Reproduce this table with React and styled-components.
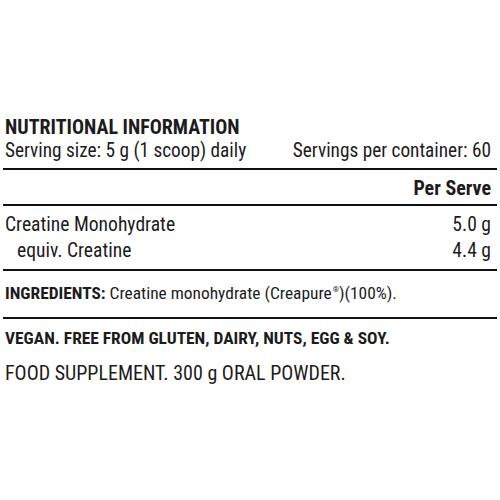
import React from "react";
import styled, { createGlobalStyle } from "styled-components";

const GlobalStyle = createGlobalStyle`
  html, body {
    margin: 0;
    padding: 0;
    background: #ffffff;
  }
  body {
    font-family: "Roboto", "Liberation Sans", sans-serif;
    color: #1c1c1c;
  }
`;

const Page = styled.div`
  width: 500px;
  height: 500px;
  box-sizing: border-box;
  padding: 116px 3px 0 3px;
`;

const Condensed = styled.div`
  font-stretch: condensed;
`;

const Heading = styled.div`
  font-size: 20px;
  font-weight: 700;
  line-height: 22px;
  padding-left: 2px;
`;

const Row = styled.div`
  display: flex;
  justify-content: space-between;
  align-items: baseline;
  padding: 0 6px 0 ${p => (p.$indent ? 14 : 2)}px;
  font-size: ${p => p.$size || 19.6}px;
  font-weight: ${p => (p.$bold ? 700 : 400)};
  line-height: ${p => p.$lh || 26}px;
`;

const Rule = styled.div`
  height: 2px;
  background: #111;
  margin: ${p => p.$m || "4px 0"};
`;

const Para = styled.div`
  padding-left: 2px;
  font-size: ${p => p.$size || 17.4}px;
  line-height: ${p => p.$lh || 22}px;
  font-weight: ${p => (p.$bold ? 700 : 400)};
  margin-top: ${p => p.$mt || 0}px;
  b {
    font-weight: 700;
  }
`;

const Reg = styled.span`
  font-size: 8px;
  position: relative;
  top: -7px;
  margin-left: 1px;
`;

export default function App() {
  return (
    <>
      <GlobalStyle />
      <Page>
        <Condensed>
          <Heading>NUTRITIONAL INFORMATION</Heading>
          <Row $size={19.3}>
            <span>Serving size: 5 g (1 scoop) daily</span>
            <span>Servings per container: 60</span>
          </Row>
          <Rule $m="4px 0 6px" />
          <Row $bold $size={20} $lh={24}>
            <span />
            <span>Per Serve</span>
          </Row>
          <Rule $m="4px 0 6px" />
          <Row>
            <span>Creatine Monohydrate</span>
            <span>5.0 g</span>
          </Row>
          <Row $indent>
            <span>equiv. Creatine</span>
            <span>4.4 g</span>
          </Row>
          <Rule $m="5px 0 11px" />
          <Para>
            <b>INGREDIENTS:</b> Creatine monohydrate (Creapure<Reg>®</Reg>)(100%).
          </Para>
          <Rule $m="9px 0 8px" />
          <Para $bold>VEGAN. FREE FROM GLUTEN, DAIRY, NUTS, EGG &amp; SOY.</Para>
          <Para $size={20} $lh={26} $mt={11}>
            FOOD SUPPLEMENT. 300 g ORAL POWDER.
          </Para>
        </Condensed>
      </Page>
    </>
  );
}
